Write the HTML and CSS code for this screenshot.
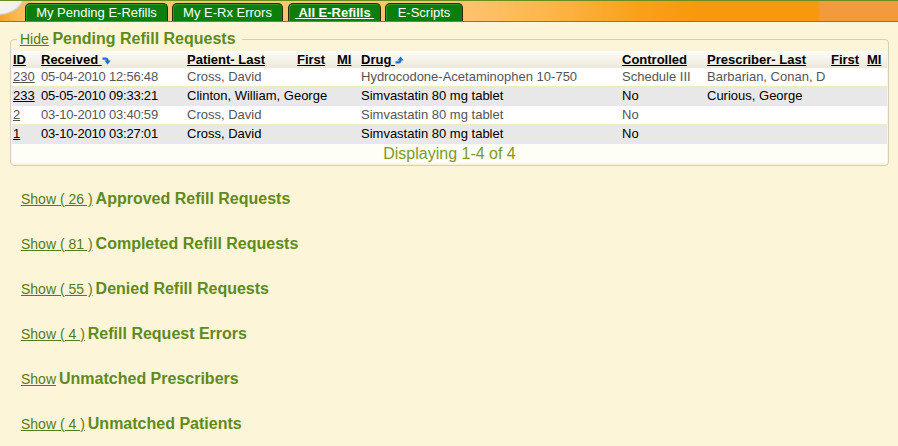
FILE: index.html
```html
<!DOCTYPE html>
<html lang="en">
<head>
<meta charset="utf-8">
<title>All E-Refills</title>
<link rel="stylesheet" href="styles.css">
</head>
<body>
<header class="topbar">
  <nav class="tabs">
    <a class="tab tab-pending" href="#">My Pending E-Refills</a>
    <a class="tab tab-errors" href="#">My E-Rx Errors</a>
    <a class="tab tab-all active" href="#"><span class="tab-label">&nbsp;All E-Refills&nbsp;</span></a>
    <a class="tab tab-scripts" href="#">E-Scripts</a>
  </nav>
</header>
<main class="content">
  <fieldset class="panel">
    <legend class="panel-legend"><a class="toggle" href="#">Hide</a> <span class="panel-title">Pending Refill Requests</span></legend>
    <table class="grid">
      <colgroup>
        <col class="c-id"><col class="c-received"><col class="c-plast"><col class="c-pfirst"><col class="c-pmi">
        <col class="c-drug"><col class="c-controlled"><col class="c-rlast"><col class="c-rfirst"><col class="c-rmi">
      </colgroup>
      <thead>
        <tr>
          <th><a href="#">ID</a></th>
          <th><a href="#">Received&nbsp;</a><svg class="sort-icon" viewBox="0 0 9 9" width="9" height="9"><path d="M0.5 2.6 H3.4 Q5.6 2.6 5.6 5" fill="none" stroke="#1d6fd4" stroke-width="2.1"/><path d="M2.4 4.6 H8.7 L5.6 8.6 Z" fill="#1d6fd4"/></svg></th>
          <th><a href="#">Patient- Last</a></th>
          <th><a href="#">First</a></th>
          <th><a href="#">MI</a></th>
          <th><a href="#">Drug&nbsp;</a><svg class="sort-icon" viewBox="0 0 9 9" width="9" height="9"><path d="M0.5 6.4 H3.4 Q5.6 6.4 5.6 4" fill="none" stroke="#1d6fd4" stroke-width="2.1"/><path d="M2.4 4.4 H8.7 L5.6 0.4 Z" fill="#1d6fd4"/></svg></th>
          <th><a href="#">Controlled</a></th>
          <th><a href="#">Prescriber- Last</a></th>
          <th><a href="#">First</a></th>
          <th><a href="#">MI</a></th>
        </tr>
      </thead>
      <tbody>
        <tr class="row-odd">
          <td><a href="#">230</a></td><td class="date">05-04-2010 12:56:48</td><td>Cross, David</td><td></td><td></td>
          <td>Hydrocodone-Acetaminophen 10-750</td><td>Schedule III</td><td>Barbarian, Conan, D</td><td></td><td></td>
        </tr>
        <tr class="row-even">
          <td><a href="#">233</a></td><td class="date">05-05-2010 09:33:21</td><td>Clinton, William, George</td><td></td><td></td>
          <td>Simvastatin 80 mg tablet</td><td>No</td><td>Curious, George</td><td></td><td></td>
        </tr>
        <tr class="row-odd">
          <td><a href="#">2</a></td><td class="date">03-10-2010 03:40:59</td><td>Cross, David</td><td></td><td></td>
          <td>Simvastatin 80 mg tablet</td><td>No</td><td></td><td></td><td></td>
        </tr>
        <tr class="row-even">
          <td><a href="#">1</a></td><td class="date">03-10-2010 03:27:01</td><td>Cross, David</td><td></td><td></td>
          <td>Simvastatin 80 mg tablet</td><td>No</td><td></td><td></td><td></td>
        </tr>
      </tbody>
      <tfoot>
        <tr><td colspan="10" class="pager">Displaying 1-4 of 4</td></tr>
      </tfoot>
    </table>
  </fieldset>

  <div class="sections">
    <div class="section"><a class="toggle" href="#">Show ( 26 )</a><span class="section-title">Approved Refill Requests</span></div>
    <div class="section"><a class="toggle" href="#">Show ( 81 )</a><span class="section-title">Completed Refill Requests</span></div>
    <div class="section"><a class="toggle" href="#">Show ( 55 )</a><span class="section-title">Denied Refill Requests</span></div>
    <div class="section"><a class="toggle" href="#">Show ( 4 )</a><span class="section-title">Refill Request Errors</span></div>
    <div class="section"><a class="toggle" href="#">Show</a><span class="section-title">Unmatched Prescribers</span></div>
    <div class="section"><a class="toggle" href="#">Show ( 4 )</a><span class="section-title">Unmatched Patients</span></div>
  </div>
</main>
</body>
</html>
```

FILE: styles.css
```css
html, body {
  margin: 0;
  padding: 0;
}

body {
  background: #fcf5d8;
  font-family: "Liberation Sans", Arial, sans-serif;
  font-size: 13px;
  color: #000;
  overflow: hidden;
}

/* ---------- top bar with tabs ---------- */
.topbar {
  height: 20px;
  border-top: 1px solid #6a8d20;
  border-bottom: 1px solid #6a8d20;
  background:
    radial-gradient(29px 21px at -3px -6px, #f7f7f5 0, #f1f1ee 88%, #d9c4a0 95%, rgba(245,166,42,0) 100%),
    linear-gradient(90deg, #f3a22a 0, #fbba55 18px, #fec672 40px, #fec26c 470px, #fdb74e 540px, #f9a01a 640px, #f8980c 700px, #f8980d 818px, #f29a3c 820px, #f29a3c 100%);
}

.tabs {
  display: flex;
  align-items: flex-end;
  height: 20px;
  padding-left: 25px;
  gap: 4px;
}

.tab {
  box-sizing: border-box;
  height: 18px;
  border: 1px solid #2f2a05;
  border-bottom: none;
  border-radius: 5px 5px 0 0;
  background: #0b7e0b;
  box-shadow: inset 1px 1px 0 #2f962f;
  color: #fff;
  font-size: 13px;
  line-height: 17px;
  text-align: center;
  text-decoration: none;
  white-space: nowrap;
}

.tab-pending { width: 143px; }
.tab-errors { width: 111px; }
.tab-all { width: 93px; margin-left: 1px; }
.tab-scripts { width: 78px; }

.tab.active {
  font-weight: bold;
}

.tab.active .tab-label {
  text-decoration: underline;
}

/* ---------- pending panel ---------- */
.content {
  padding: 0;
}

.panel {
  min-width: 0;
  margin: 8px 9px 0 10px;
  padding: 2px 1px 2px;
  border: 1px solid #d3cfbc;
  border-radius: 4px;
}

.panel-legend {
  margin-left: 5px;
  padding: 0 6px 0 3px;
  line-height: 18px;
  white-space: nowrap;
}

.toggle {
  color: #557a1b;
  font-size: 14px;
  text-decoration: underline;
}

.panel-title,
.section-title {
  color: #5f8a1c;
  font-size: 16px;
  font-weight: bold;
}

.grid {
  width: 100%;
  table-layout: fixed;
  border-collapse: separate;
  border-spacing: 0;
}

.c-id { width: 28px; }
.c-received { width: 146px; }
.c-plast { width: 110px; }
.c-pfirst { width: 40px; }
.c-pmi { width: 24px; }
.c-drug { width: 261px; }
.c-controlled { width: 85px; }
.c-rlast { width: 124px; }
.c-rfirst { width: 36px; }
.c-rmi { width: 21px; }

.grid th {
  padding: 0 1px;
  line-height: 17px;
  text-align: left;
  font-size: 13px;
  font-weight: bold;
  white-space: nowrap;
  background: linear-gradient(#fefdf8, #ece9da);
}

.grid th a {
  color: #000;
  text-decoration: underline;
}

.sort-icon {
  vertical-align: -1px;
}

.grid td {
  padding: 0 1px;
  line-height: 18px;
  border-bottom: 1px solid #f1ebc3;
  white-space: nowrap;
  overflow: visible;
}

.grid td a {
  color: inherit;
  text-decoration: underline;
}

.row-odd td {
  background: #fff;
  color: #555;
}

.row-even td {
  background: #e8e8e8;
  color: #000;
}

.grid td.date {
  letter-spacing: -0.2px;
}

.grid td.pager {
  background: #fefdf6;
  border-bottom: none;
  color: #7d9a1f;
  font-size: 16px;
  line-height: 19px;
  text-align: center;
}

/* ---------- collapsed sections ---------- */
.sections {
  margin-top: 10px;
  padding-left: 21px;
}

.section {
  display: flex;
  align-items: baseline;
  gap: 3px;
  height: 18px;
  padding: 14px 0 13px;
  line-height: 18px;
  white-space: nowrap;
}
```
